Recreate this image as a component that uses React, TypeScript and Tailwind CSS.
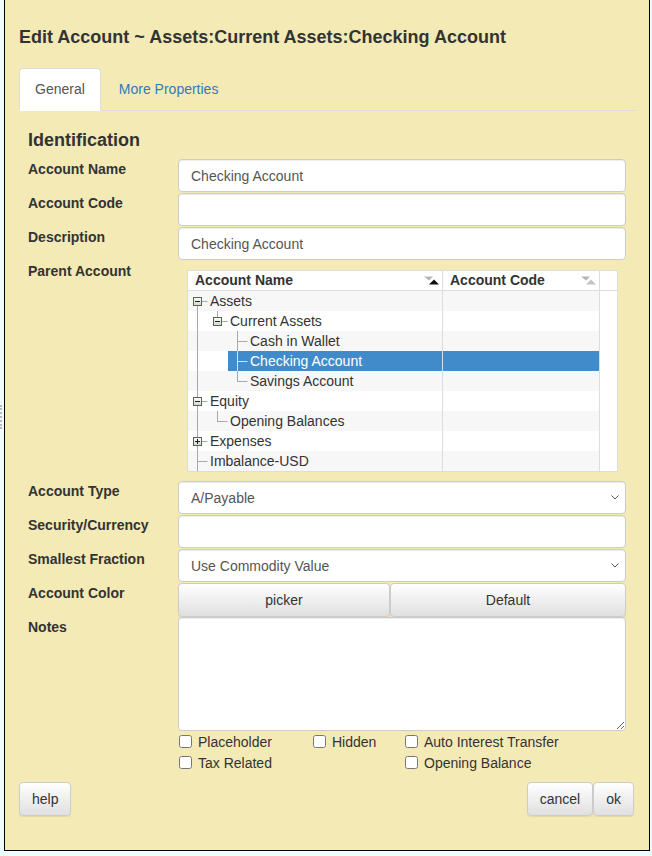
import React from "react";

type TreeRow = {
  name: string;
  level: number;
  anc: boolean[]; // ancestor guide lines that keep running down
  vert: "top" | "bottom" | "full";
  box?: "minus" | "plus";
  selected?: boolean;
};

const treeRows: TreeRow[] = [
  { name: "Assets", level: 0, anc: [], vert: "bottom", box: "minus" },
  { name: "Current Assets", level: 1, anc: [true], vert: "top", box: "minus" },
  { name: "Cash in Wallet", level: 2, anc: [true, false], vert: "full" },
  { name: "Checking Account", level: 2, anc: [true, false], vert: "full", selected: true },
  { name: "Savings Account", level: 2, anc: [true, false], vert: "top" },
  { name: "Equity", level: 0, anc: [], vert: "full", box: "minus" },
  { name: "Opening Balances", level: 1, anc: [true], vert: "top" },
  { name: "Expenses", level: 0, anc: [], vert: "full", box: "plus" },
  { name: "Imbalance-USD", level: 0, anc: [], vert: "full" },
];

function SortIcon({ active }: { active?: boolean }) {
  return (
    <svg width="15" height="9" viewBox="0 0 15 9" className="shrink-0">
      <polygon points="0,0.5 9,0.5 5,4.5" fill="#b5b5b5" />
      <polygon points="5,8.5 15,8.5 10,3.5" fill={active ? "#111" : "#c4c4c4"} />
    </svg>
  );
}

function TreeLines({ row }: { row: TreeRow }) {
  const line = row.selected ? "#d4e3f2" : "#a8a8a8";
  const y1 = row.vert === "bottom" ? 10 : 0;
  const y2 = row.vert === "top" ? 10.5 : 20;
  return (
    <svg width="22" height="20" viewBox="0 0 22 20" className="shrink-0">
      <line x1="9.5" y1={y1} x2="9.5" y2={y2} stroke={line} />
      <line x1="9" y1="10.5" x2="19.5" y2="10.5" stroke={line} />
      {row.box && (
        <g>
          <defs>
            <linearGradient id="boxfill" x1="0" y1="0" x2="0" y2="1">
              <stop offset="0" stopColor="#ffffff" />
              <stop offset="1" stopColor="#cfd6cf" />
            </linearGradient>
          </defs>
          <rect x="5.5" y="6.5" width="8" height="8" fill="url(#boxfill)" stroke="#56664f" />
          <line x1="7" y1="10.5" x2="12" y2="10.5" stroke="#1d1d1d" />
          {row.box === "plus" && <line x1="9.5" y1="8" x2="9.5" y2="13" stroke="#1d1d1d" />}
        </g>
      )}
    </svg>
  );
}

function AccountTree() {
  return (
    <div className="ml-[9px] mt-[9px] mb-[9px] w-[431px] border border-[#ddd] bg-white text-sm text-[#333]">
      <div className="grid h-[20px] grid-cols-[255px_157px_17px] border-b border-[#ddd] font-bold leading-[19px]">
        <div className="flex items-center justify-between border-r border-[#ddd] pl-[7px] pr-[3px]">
          <span>Account Name</span>
          <SortIcon active />
        </div>
        <div className="flex items-center justify-between border-r border-[#ddd] pl-[7px] pr-[3px]">
          <span>Account Code</span>
          <SortIcon />
        </div>
        <div />
      </div>
      {treeRows.map((row, i) => {
        const stripe = i % 2 === 0 ? "bg-[#f7f7f7]" : "bg-white";
        return (
          <div key={row.name} className="grid h-[20px] grid-cols-[255px_157px_17px] leading-[20px]">
            <div className={`flex border-r border-[#ddd] ${stripe}`}>
              {row.level > 0 && (
                <svg width={20 * row.level} height="20" className="shrink-0">
                  {row.anc.map((on, k) =>
                    on ? <line key={k} x1={9.5 + 20 * k} y1="0" x2={9.5 + 20 * k} y2="20" stroke="#a8a8a8" /> : null
                  )}
                </svg>
              )}
              <div className={`flex flex-1 items-center ${row.selected ? "bg-[#428bca] text-white" : ""}`}>
                <TreeLines row={row} />
                <span className="whitespace-nowrap">{row.name}</span>
              </div>
            </div>
            <div className={`border-r border-[#ddd] ${row.selected ? "bg-[#428bca]" : stripe}`} />
            <div />
          </div>
        );
      })}
    </div>
  );
}

const inputCls =
  "h-[33px] w-full rounded border border-[#ccc] bg-white px-3 text-sm text-[#555] shadow-[inset_0_1px_1px_rgba(0,0,0,0.075)]";

const btnCls =
  "flex h-[34px] items-center justify-center rounded border border-[#ccc] bg-gradient-to-b from-white to-[#e0e0e0] px-3 text-sm text-[#333] shadow-[0_1px_1px_rgba(0,0,0,0.075)]";

function Field({ label, children }: { label: string; children: React.ReactNode }) {
  return (
    <div className="flex">
      <label className="w-[150px] shrink-0 text-sm font-bold leading-5 text-[#333]">{label}</label>
      <div className="min-w-0 flex-1">{children}</div>
    </div>
  );
}

function Select({ value }: { value: string }) {
  return (
    <div className={`${inputCls} mb-px flex items-center justify-between pr-[6px]`}>
      <span>{value}</span>
      <svg width="8" height="5" viewBox="0 0 8 5">
        <polyline points="0.5,0.5 4,4 7.5,0.5" fill="none" stroke="#555" />
      </svg>
    </div>
  );
}

function Check({ label }: { label: string }) {
  return (
    <label className="flex h-[21px] items-center text-sm text-[#333]">
      <input type="checkbox" className="m-0 ml-px mr-[6px] h-[13px] w-[13px]" />
      {label}
    </label>
  );
}

export default function App() {
  return (
    <div className="flex min-h-[856px] bg-[#effcfc] font-['Liberation_Sans',Arial,sans-serif]">
      {/* grip of the pane behind the dialog */}
      <div className="w-[4px] shrink-0">
        <div className="mt-[405px] h-[24px] w-[2px] border-l-2 border-dotted border-[#b8b8b8]" />
      </div>

      <div className="h-[851px] w-[646px] border-x border-b border-black bg-[#f3eab6] pl-[14px] pr-[13px] pt-[27px]">
        <h4 className="text-[18px] font-bold leading-5 text-[#333]">
          Edit Account ~ Assets:Current Assets:Checking Account
        </h4>

        <div className="mt-[21px] flex border-b border-[#ddd] text-sm leading-5">
          <div className="-mb-px rounded-t border border-[#ddd] border-b-transparent bg-white px-[15px] py-[10px] text-[#555]">
            General
          </div>
          <div className="ml-[2px] border border-transparent px-[15px] py-[10px] text-[#337ab7]">More Properties</div>
        </div>

        <div className="pl-[9px] pr-[10px]">
          <h4 className="mb-[9px] mt-[19px] text-[18px] font-bold leading-5 text-[#333]">Identification</h4>

          <Field label="Account Name">
            <input className={`${inputCls} mb-px`} defaultValue="Checking Account" />
          </Field>
          <Field label="Account Code">
            <input className={`${inputCls} mb-px`} defaultValue="" />
          </Field>
          <Field label="Description">
            <input className={`${inputCls} mb-px`} defaultValue="Checking Account" />
          </Field>
          <Field label="Parent Account">
            <AccountTree />
          </Field>
          <Field label="Account Type">
            <Select value="A/Payable" />
          </Field>
          <Field label="Security/Currency">
            <input className={`${inputCls} mb-px`} defaultValue="" />
          </Field>
          <Field label="Smallest Fraction">
            <Select value="Use Commodity Value" />
          </Field>
          <Field label="Account Color">
            <div className="flex">
              <button className={`${btnCls} w-[212px]`}>picker</button>
              <button className={`${btnCls} flex-1`}>Default</button>
            </div>
          </Field>
          <Field label="Notes">
            <textarea className="block h-[114px] w-full rounded border border-[#ccc] bg-white px-3 py-1.5 text-sm text-[#555] shadow-[inset_0_1px_1px_rgba(0,0,0,0.075)]" />
          </Field>

          <div className="ml-[150px] grid grid-cols-[134px_92px_1fr]">
            <Check label="Placeholder" />
            <Check label="Hidden" />
            <Check label="Auto Interest Transfer" />
            <Check label="Tax Related" />
            <div />
            <Check label="Opening Balance" />
          </div>
        </div>

        <div className="mt-[9px] flex justify-between pr-[2px]">
          <button className={btnCls}>help</button>
          <div className="flex">
            <button className={btnCls}>cancel</button>
            <button className={btnCls}>ok</button>
          </div>
        </div>
      </div>
    </div>
  );
}
